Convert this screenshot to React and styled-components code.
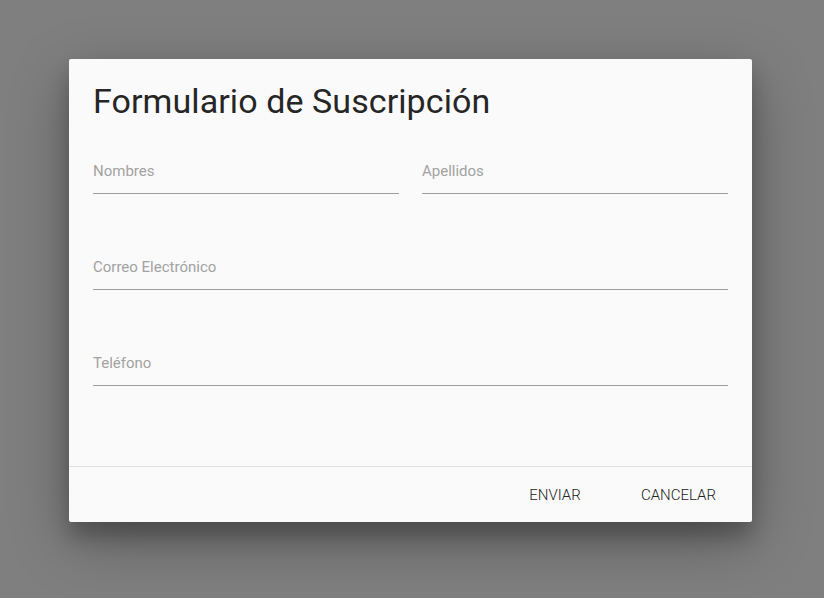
import React from 'react';
import styled, { createGlobalStyle } from 'styled-components';

const GlobalStyle = createGlobalStyle`
    html, body {
        margin: 0;
        padding: 0;
        background: #7f7f7f;
        font-family: Roboto, "Liberation Sans", sans-serif;
    }
`;

const Backdrop = styled.div`
    min-height: 598px;
    box-sizing: border-box;
    padding: 59px 0 0 69px;
    background: #7f7f7f;
`;

const Dialog = styled.div`
    width: 683px;
    background: #fafafa;
    border-radius: 2px;
    box-shadow: 0 19px 60px rgba(0, 0, 0, 0.3), 0 15px 20px rgba(0, 0, 0, 0.22);
    display: flex;
    flex-direction: column;
`;

const Body = styled.div`
    padding: 22px 24px 80px;
`;

const Title = styled.h3`
    margin: 0 0 40px;
    font-size: 34px;
    line-height: 40px;
    font-weight: 400;
    letter-spacing: 0.08px;
    color: #262626;
`;

const Row = styled.div`
    display: grid;
    grid-template-columns: ${p => p.cols === 2 ? '1fr 1fr' : '1fr'};
    column-gap: 23px;
    margin-top: ${p => p.first ? '0' : '63px'};
`;

const Field = styled.div`
    display: flex;
    flex-direction: column;
    padding-bottom: 12px;
    border-bottom: 1px solid #9e9e9e;
`;

const Label = styled.label`
    font-size: 15px;
    line-height: 20px;
    color: #a2a2a2;
`;

const Footer = styled.div`
    border-top: 1px solid #e0e0e0;
    height: 55px;
    display: flex;
    align-items: center;
    justify-content: flex-end;
    gap: 26px;
    padding-right: 20px;
`;

const FlatButton = styled.button`
    min-width: 88px;
    height: 36px;
    padding: 0 16px;
    border: none;
    background: transparent;
    font-family: Roboto, "Liberation Sans", sans-serif;
    font-size: 15px;
    font-weight: 300;
    color: #222;
    text-transform: uppercase;
    cursor: pointer;
    &:focus {
        outline: none;
    }
`;

const App = () => {
    return (
        <>
            <GlobalStyle />
            <Backdrop>
                <Dialog>
                    <Body>
                        <Title>Formulario de Suscripción</Title>
                        <Row cols={2} first>
                            <Field><Label>Nombres</Label></Field>
                            <Field><Label>Apellidos</Label></Field>
                        </Row>
                        <Row>
                            <Field><Label>Correo Electrónico</Label></Field>
                        </Row>
                        <Row>
                            <Field><Label>Teléfono</Label></Field>
                        </Row>
                    </Body>
                    <Footer>
                        <FlatButton>Enviar</FlatButton>
                        <FlatButton>Cancelar</FlatButton>
                    </Footer>
                </Dialog>
            </Backdrop>
        </>
    );
};

export default App;
